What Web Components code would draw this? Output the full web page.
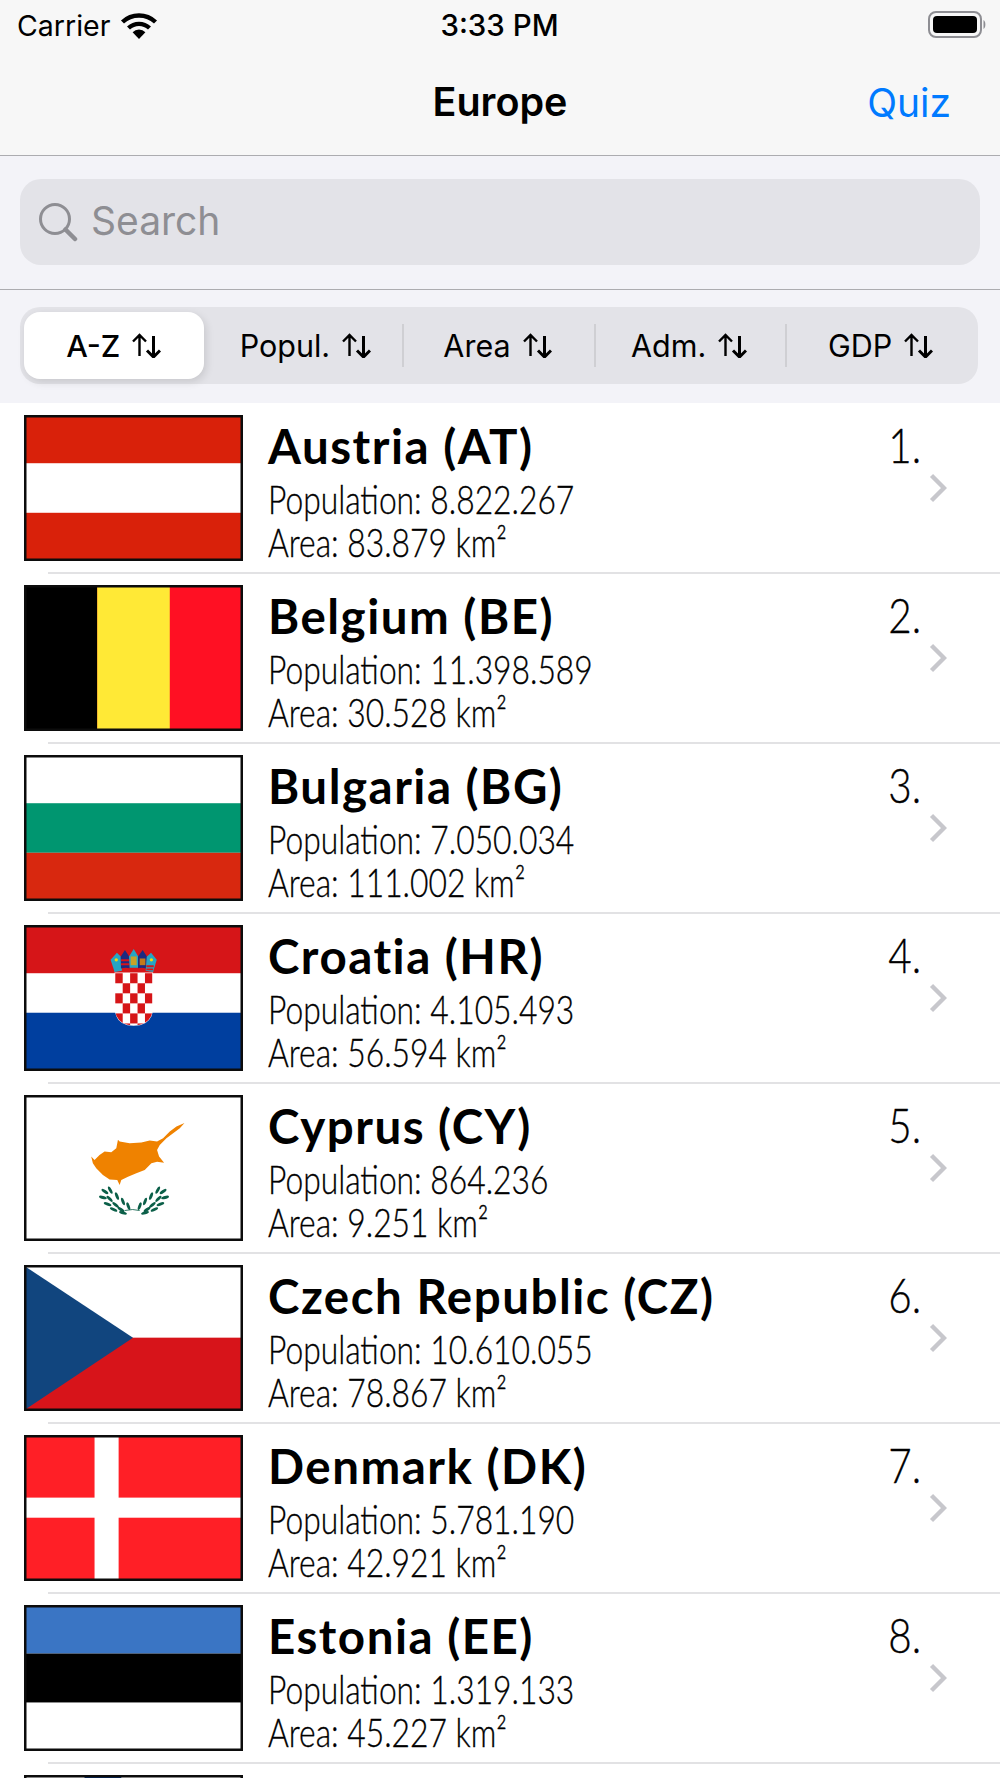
<!DOCTYPE html>
<html>
<head>
<meta charset="utf-8">
<title>Europe</title>
<style>
  html, body { margin: 0; height: 1778px; overflow: hidden; background: #fff; }
  body { font-family: Inter, "Liberation Sans", sans-serif; color: #000; }
</style>
</head>
<body>
<status-bar carrier="Carrier" time="3:33 PM"></status-bar>
<nav-bar title-text="Europe" action="Quiz"></nav-bar>
<search-bar placeholder="Search"></search-bar>
<sort-control>
  <sort-segment selected>A-Z</sort-segment>
  <sort-segment>Popul.</sort-segment>
  <sort-segment divider>Area</sort-segment>
  <sort-segment divider>Adm.</sort-segment>
  <sort-segment divider>GDP</sort-segment>
</sort-control>
<country-list>
  <country-row flag="at" name="Austria (AT)" population="8.822.267" area="83.879" rank="1."></country-row>
  <country-row flag="be" name="Belgium (BE)" population="11.398.589" area="30.528" rank="2."></country-row>
  <country-row flag="bg" name="Bulgaria (BG)" population="7.050.034" area="111.002" rank="3."></country-row>
  <country-row flag="hr" name="Croatia (HR)" population="4.105.493" area="56.594" rank="4."></country-row>
  <country-row flag="cy" name="Cyprus (CY)" population="864.236" area="9.251" rank="5."></country-row>
  <country-row flag="cz" name="Czech Republic (CZ)" population="10.610.055" area="78.867" rank="6."></country-row>
  <country-row flag="dk" name="Denmark (DK)" population="5.781.190" area="42.921" rank="7."></country-row>
  <country-row flag="ee" name="Estonia (EE)" population="1.319.133" area="45.227" rank="8."></country-row>
  <country-row flag="fi"></country-row>
</country-list>

<script>
class StatusBar extends HTMLElement {
  connectedCallback() {
    this.attachShadow({ mode: 'open' });
    this.shadowRoot.innerHTML = `
      <style>
        :host { display: grid; grid-template-columns: 1fr auto 1fr; align-items: center; height: 50px; padding: 0 12px 0 17px; background: #f7f7f7; font-size: 28.5px; }
        .left { display: flex; align-items: center; }
        .wifi { margin-left: 10px; display: block; }
        .time { font-size: 29.5px; font-weight: 500; margin-left: -6px; }
        .battery { display: block; justify-self: end; }
      </style>
      <div class="left">
        <span>${this.getAttribute('carrier')}</span>
        <svg class="wifi" width="38" height="27" viewBox="0 0 38 27">
          <path d="M2.5 10 A24 24 0 0 1 35.5 10" fill="none" stroke="#000" stroke-width="4.4"/>
          <path d="M8.5 16 A15.5 15.5 0 0 1 29.5 16" fill="none" stroke="#000" stroke-width="4.4"/>
          <path d="M19 27 L12.6 20.2 A9 9 0 0 1 25.4 20.2 Z" fill="#000"/>
        </svg>
      </div>
      <span class="time">${this.getAttribute('time')}</span>
      <svg class="battery" width="60" height="28" viewBox="0 0 60 28">
        <rect x="1" y="1" width="52" height="25" rx="7" fill="none" stroke="#8e8e93" stroke-width="2"/>
        <rect x="5" y="5" width="44" height="17" rx="4" fill="#000"/>
        <path d="M55.5 9 C58 10 58 17 55.5 18 Z" fill="#8e8e93"/>
      </svg>
    `;
  }
}

class NavBar extends HTMLElement {
  connectedCallback() {
    this.attachShadow({ mode: 'open' });
    this.shadowRoot.innerHTML = `
      <style>
        :host { display: grid; grid-template-columns: 1fr auto 1fr; align-items: center; height: 104px; padding: 0 49px 1px 49px; background: #f7f7f7; border-bottom: 1px solid #acacb0; }
        .title { grid-column: 2; font-size: 39.5px; font-weight: 600; }
        .action { grid-column: 3; justify-self: end; font-size: 39px; color: #007aff; }
      </style>
      <span class="title">${this.getAttribute('title-text')}</span>
      <span class="action">${this.getAttribute('action')}</span>
    `;
  }
}

class SearchBar extends HTMLElement {
  connectedCallback() {
    this.attachShadow({ mode: 'open' });
    this.shadowRoot.innerHTML = `
      <style>
        :host { display: block; padding: 23px 20px 24px; background: #f3f3f8; border-bottom: 1px solid #acacb0; }
        .field { display: flex; align-items: center; height: 86px; padding-left: 18px; border-radius: 21px; background: #e3e3e8; color: #8e8e93; font-size: 39px; }
        .field span { margin-top: -4px; }
        svg { display: block; margin-right: 13px; }
      </style>
      <div class="field">
        <svg width="40" height="40" viewBox="0 0 40 40">
          <circle cx="17" cy="17" r="14.5" fill="none" stroke="#8e8e93" stroke-width="3"/>
          <path d="M27.5 27.5 L37 37" fill="none" stroke="#8e8e93" stroke-width="4.5" stroke-linecap="round"/>
        </svg>
        <span>${this.getAttribute('placeholder')}</span>
      </div>
    `;
  }
}

class SortControl extends HTMLElement {
  connectedCallback() {
    this.attachShadow({ mode: 'open' });
    this.shadowRoot.innerHTML = `
      <style>
        :host { display: block; padding: 17px 22px 19px 20px; background: #f3f3f8; }
        .track { display: flex; height: 77px; border-radius: 20px; background: #e3e3e8; }
      </style>
      <div class="track"><slot></slot></div>
    `;
  }
}

class SortSegment extends HTMLElement {
  connectedCallback() {
    this.attachShadow({ mode: 'open' });
    this.shadowRoot.innerHTML = `
      <style>
        :host { display: flex; flex: 1 1 0; align-items: center; min-width: 0; }
        .rule { display: none; width: 2px; height: 43px; margin-left: -1px; background: #cfcfd3; }
        :host([divider]) .rule { display: block; }
        .seg { flex: 1; display: flex; align-items: center; justify-content: center; gap: 12px; height: 67px; font-size: 30.5px; font-weight: 400; border-radius: 16px; margin-right: 4px; }
        :host([selected]) .seg { margin: 0 8px 0 4px; background: #fff; font-weight: 500; box-shadow: 2px 3px 8px rgba(0,0,0,.12); }
        svg { display: block; }
      </style>
      <span class="rule"></span>
      <div class="seg">
        <span><slot></slot></span>
        <svg width="29" height="25" viewBox="0 0 29 25">
          <path d="M7.5 23 V2 M1 8.5 L7.5 2 L14 8.5" fill="none" stroke="#000" stroke-width="2.4"/>
          <path d="M21.5 3 V24 M15 17.5 L21.5 24 L28 17.5" fill="none" stroke="#000" stroke-width="3"/>
        </svg>
      </div>
    `;
  }
}

class CountryList extends HTMLElement {
  connectedCallback() {
    this.attachShadow({ mode: 'open' });
    this.shadowRoot.innerHTML = `
      <style>:host { display: block; background: #fff; padding-top: 1px; }</style>
      <slot></slot>
    `;
  }
}

// laurel leaves for the cyprus flag, in 3x crop units
function laurel() {
  const leaves = [
    [106,274,35],[122,270,62],[142,288,68],[100,292,15],[120,296,45],[160,304,70],
    [114,312,20],[138,314,40],[176,318,70],[132,328,25],[154,328,35],[160,338,15]
  ];
  const one = leaves.map(([x, y, r]) =>
    `<ellipse cx="${x}" cy="${y}" rx="12" ry="4.4" transform="rotate(${r} ${x} ${y})"/>`).join('');
  return `<g fill="#0b5f48">${one}<g transform="translate(386 0) scale(-1 1)">${one}</g></g>
    <path d="M165 331 Q190 325 210 331" fill="none" stroke="#0b5f48" stroke-width="2.5"/>`;
}

function croatiaShield() {
  let squares = '';
  for (let row = 0; row < 6; row++) {
    for (let col = 0; col < 5; col++) {
      if ((row + col) % 2 === 0) {
        squares += `<rect x="${347 + col * 22.2}" y="${190 + row * 30}" width="22.2" height="30" fill="#d61518"/>`;
      }
    }
  }
  return `
    <clipPath id="shield"><path d="M346 172 H459 V290 Q459 345 402 346 Q346 345 346 290 Z"/></clipPath>
    <path d="M345 176 H460 V290 Q460 347 402 347 Q345 347 345 290 Z" fill="#fff"/>
    <g clip-path="url(#shield)">${squares}</g>
    <path d="M344 172 Q402 150 460 172 V188 H344 Z" fill="#d61518"/>
    <path d="M333 150 L352 129 L364 141 L367 183 L345 186 Z" fill="#26a5c4"/>
    <path d="M363 141 L376 121 L389 141 L390 175 Q376 172 364 176 Z" fill="#1c2a80"/>
    <path d="M364 148 H390 V154 H364 Z M364 160 H390 V166 H364 Z" fill="#d61518"/>
    <path d="M388 140 L402 118 L416 140 L415 174 L390 174 Z" fill="#26a5c4"/>
    <path d="M393 140 H411 V166 H393 Z" fill="#c9a227"/>
    <path d="M415 140 L429 121 L442 141 L440 176 Q428 172 415 175 Z" fill="#1c2a80"/>
    <path d="M420 146 H437 V166 H420 Z" fill="#c27a1b"/>
    <path d="M441 141 L454 129 L471 150 L460 186 L438 183 Z" fill="#26a5c4"/>
    <path d="M440 166 H462 V172 H440 Z M440 176 H460 V181 H440 Z" fill="#d61518"/>
    <circle cx="350" cy="150" r="5" fill="#f5d90a"/>
    <circle cx="455" cy="150" r="5" fill="#f5d90a"/>
  `;
}

const FLAGS = {
  at: `<rect width="643" height="424" fill="#d9210a"/><rect y="138" width="643" height="148" fill="#fff"/>`,
  be: `<rect width="643" height="424" fill="#ff1023"/><rect width="213" height="424" fill="#000"/><rect x="213" width="217" height="424" fill="#ffe936"/>`,
  bg: `<rect width="643" height="424" fill="#fff"/><rect y="138" width="643" height="148" fill="#009670"/><rect y="286" width="643" height="138" fill="#d8280f"/>`,
  hr: `<rect width="643" height="424" fill="#fff"/><rect width="643" height="138" fill="#d61518"/><rect y="256" width="643" height="168" fill="#003f9f"/><g transform="translate(-80 -52)">${croatiaShield()}</g>`,
  cy: `<rect width="643" height="424" fill="#fff"/><g transform="translate(130 8)">
    <path fill="#ef8200" d="M344 70 L320 80 L300 95 L280 115 L262 125 L240 122 L215 128 L180 130 L150 125 L145 120 L140 145 L125 157 L105 155 L90 165 L75 180 L65 170 L70 190 L80 205 L100 225 L120 238 L143 240 L150 255 L155 240 L175 230 L200 220 L225 210 L245 190 L262 185 L283 188 L268 170 L262 150 L270 135 L290 115 L310 100 L330 85 Z"/>
    ${laurel()}</g>`,
  cz: `<rect width="643" height="424" fill="#fff"/><rect y="211" width="643" height="213" fill="#d7141a"/><path d="M0 0 L320 211 L0 424 Z" fill="#11457e"/>`,
  dk: `<rect width="643" height="424" fill="#ff1f26"/><rect x="205" width="72" height="424" fill="#fff"/><rect y="181" width="643" height="60" fill="#fff"/>`,
  ee: `<rect width="643" height="424" fill="#fff"/><rect width="643" height="139" fill="#3a75c4"/><rect y="139" width="643" height="146" fill="#000"/>`,
  fi: `<rect width="643" height="424" fill="#fff"/><rect x="175" width="110" height="424" fill="#003580"/><rect y="170" width="643" height="110" fill="#003580"/>`
};

class FlagIcon extends HTMLElement {
  connectedCallback() {
    this.attachShadow({ mode: 'open' });
    this.shadowRoot.innerHTML = `
      <style>
        :host { display: block; width: 219px; height: 146px; box-sizing: border-box; border: 2px solid #0c0c0c; }
        svg { display: block; width: 100%; height: 100%; }
      </style>
      <svg viewBox="0 0 643 424" preserveAspectRatio="none">
        ${FLAGS[this.getAttribute('code')]}
        <rect width="643" height="424" fill="none" stroke="#0c0c0c" stroke-width="3"/>
      </svg>
    `;
  }
}

class CountryRow extends HTMLElement {
  connectedCallback() {
    const name = this.getAttribute('name');
    this.attachShadow({ mode: 'open' });
    this.shadowRoot.innerHTML = `
      <style>
        :host { display: block; height: 170px; font-family: Lato, "Liberation Sans", sans-serif; }
        .row { display: flex; height: 168px; box-sizing: border-box; padding: 11px 53px 0 24px; }
        .info { flex: 1; margin-left: 25px; min-width: 0; white-space: nowrap; }
        .name { font-size: 47.5px; font-weight: 700; line-height: 50px; margin-top: 6px; letter-spacing: 1.5px; }
        .sub { font-size: 39px; line-height: 43px; transform: scaleX(.815); transform-origin: left; font-weight: 300; -webkit-text-stroke: .35px #000; }
        .name + .sub { margin-top: 7px; }
        .side { display: flex; flex-direction: column; align-items: flex-end; }
        .rank { font-size: 47px; line-height: 50px; margin: 5px 26px 0 0; font-weight: 300; -webkit-text-stroke: .35px #000; transform: scaleX(.86); transform-origin: right; }
        .chev { display: block; margin-top: 3px; }
        .sep { height: 2px; margin-left: 48px; background: #e2e2e4; }
      </style>
      <div class="row">
        <flag-icon code="${this.getAttribute('flag')}"></flag-icon>
        ${name ? `<div class="info">
          <div class="name">${name}</div>
          <div class="sub">Population: ${this.getAttribute('population')}</div>
          <div class="sub">Area: ${this.getAttribute('area')} km²</div>
        </div>
        <div class="side">
          <div class="rank">${this.getAttribute('rank')}</div>
          <svg class="chev" width="18" height="30" viewBox="0 0 18 30"><path d="M2.5 2.5 L15 15 L2.5 27.5" fill="none" stroke="#c7c7cc" stroke-width="4.4"/></svg>
        </div>` : ''}
      </div>
      <div class="sep"></div>
    `;
  }
}

customElements.define('status-bar', StatusBar);
customElements.define('nav-bar', NavBar);
customElements.define('search-bar', SearchBar);
customElements.define('sort-control', SortControl);
customElements.define('sort-segment', SortSegment);
customElements.define('country-list', CountryList);
customElements.define('flag-icon', FlagIcon);
customElements.define('country-row', CountryRow);
</script>
</body>
</html>
